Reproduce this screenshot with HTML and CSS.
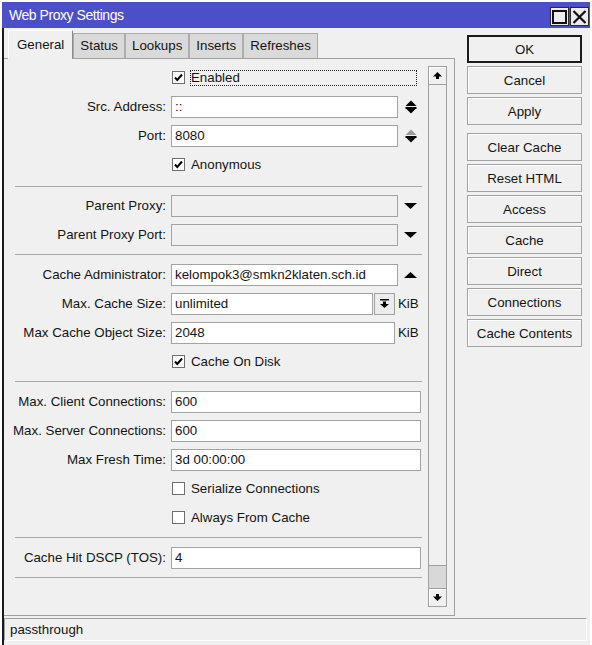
FILE: index.html
```html
<!DOCTYPE html>
<html>
<head>
<meta charset="utf-8">
<title>Web Proxy Settings</title>
<link rel="stylesheet" href="styles.css">
</head>
<body>
<div class="window">
  <div class="titlebar">
    <span class="title">Web Proxy Settings</span>
    <div class="tb-btns">
      <span class="tb-btn"><svg width="15" height="14" viewBox="0 0 15 14"><rect x="1" y="1" width="13" height="12" fill="none" stroke="#111" stroke-width="2"/></svg></span>
      <span class="tb-btn"><svg width="15" height="14" viewBox="0 0 15 14"><path d="M1.5 1L13.5 13M13.5 1L1.5 13" stroke="#111" stroke-width="2.2" fill="none"/></svg></span>
    </div>
  </div>
  <div class="body">
    <div class="top">
      <div class="main">
        <div class="tabs">
          <div class="tab active">General</div>
          <div class="tab">Status</div>
          <div class="tab">Lookups</div>
          <div class="tab">Inserts</div>
          <div class="tab">Refreshes</div>
        </div>
        <div class="panel">
          <div class="form">
            <div class="row">
              <span></span>
              <div class="field"><span class="cb checked"><svg width="11" height="11" viewBox="0 0 11 11"><path d="M2 5.5L4.3 8L9 2.5" stroke="#000" stroke-width="2" fill="none"/></svg></span><span class="focus">Enabled</span></div>
            </div>
            <div class="row">
              <span class="label">Src. Address:</span>
              <div class="field"><div class="input w-mid">::</div>
                <svg class="icon-spin" width="12" height="14" viewBox="0 0 12 14"><path d="M0.5 6L6 0.5L11.5 6Z" fill="#000"/><rect x="0.5" y="7" width="11" height="2" fill="#000"/><path d="M1.5 9H10.5L6 13.5Z" fill="#000"/></svg>
              </div>
            </div>
            <div class="row">
              <span class="label">Port:</span>
              <div class="field"><div class="input w-mid">8080</div>
                <svg class="icon-spin" width="12" height="14" viewBox="0 0 12 14"><path d="M0.5 6L6 0.5L11.5 6Z" fill="#9a9a9a"/><rect x="0.5" y="7" width="11" height="2" fill="#000"/><path d="M1.5 9H10.5L6 13.5Z" fill="#000"/></svg>
              </div>
            </div>
            <div class="row">
              <span></span>
              <div class="field"><span class="cb checked"><svg width="11" height="11" viewBox="0 0 11 11"><path d="M2 5.5L4.3 8L9 2.5" stroke="#000" stroke-width="2" fill="none"/></svg></span><span class="cb-text">Anonymous</span></div>
            </div>

            <div class="sep first"></div>

            <div class="row">
              <span class="label">Parent Proxy:</span>
              <div class="field"><div class="input w-mid disabled"></div>
                <svg class="icon-drop" width="13" height="6" viewBox="0 0 13 6"><path d="M0 0H13L6.5 6Z" fill="#000"/></svg>
              </div>
            </div>
            <div class="row">
              <span class="label">Parent Proxy Port:</span>
              <div class="field"><div class="input w-mid disabled"></div>
                <svg class="icon-drop" width="13" height="6" viewBox="0 0 13 6"><path d="M0 0H13L6.5 6Z" fill="#000"/></svg>
              </div>
            </div>

            <div class="sep"></div>

            <div class="row">
              <span class="label">Cache Administrator:</span>
              <div class="field"><div class="input w-mid">kelompok3@smkn2klaten.sch.id</div>
                <svg class="icon-drop" width="13" height="6" viewBox="0 0 13 6"><path d="M0 6H13L6.5 0Z" fill="#000"/></svg>
              </div>
            </div>
            <div class="row">
              <span class="label">Max. Cache Size:</span>
              <div class="field"><div class="input w-short">unlimited</div>
                <span class="mini-btn"><svg width="9" height="9" viewBox="0 0 9 9"><rect x="0" y="0" width="9" height="1.5" fill="#000"/><rect x="3" y="2.5" width="3" height="3" fill="#000"/><path d="M0 5H9L4.5 9Z" fill="#000"/></svg></span>
                <span class="unit">KiB</span>
              </div>
            </div>
            <div class="row">
              <span class="label">Max Cache Object Size:</span>
              <div class="field"><div class="input w-obj">2048</div><span class="unit">KiB</span></div>
            </div>
            <div class="row">
              <span></span>
              <div class="field"><span class="cb checked"><svg width="11" height="11" viewBox="0 0 11 11"><path d="M2 5.5L4.3 8L9 2.5" stroke="#000" stroke-width="2" fill="none"/></svg></span><span class="cb-text">Cache On Disk</span></div>
            </div>

            <div class="sep"></div>

            <div class="row">
              <span class="label">Max. Client Connections:</span>
              <div class="field"><div class="input w-wide">600</div></div>
            </div>
            <div class="row">
              <span class="label">Max. Server Connections:</span>
              <div class="field"><div class="input w-wide">600</div></div>
            </div>
            <div class="row">
              <span class="label">Max Fresh Time:</span>
              <div class="field"><div class="input w-wide">3d 00:00:00</div></div>
            </div>
            <div class="row">
              <span></span>
              <div class="field"><span class="cb"></span><span class="cb-text">Serialize Connections</span></div>
            </div>
            <div class="row">
              <span></span>
              <div class="field"><span class="cb"></span><span class="cb-text">Always From Cache</span></div>
            </div>

            <div class="sep"></div>

            <div class="row">
              <span class="label">Cache Hit DSCP (TOS):</span>
              <div class="field"><div class="input w-wide">4</div></div>
            </div>

            <div class="sep"></div>
          </div>
          <div class="scrollbar">
            <div class="sb-btn"><svg width="9" height="7" viewBox="0 0 9 7"><path d="M4.5 0L9 4.5H6V7H3V4.5H0Z" fill="#000"/></svg></div>
            <div class="sb-track"><div class="sb-thumb"></div></div>
            <div class="sb-btn"><svg width="9" height="7" viewBox="0 0 9 7"><path d="M3 0H6V2.5H9L4.5 7L0 2.5H3Z" fill="#000"/></svg></div>
          </div>
        </div>
      </div>
      <div class="side">
        <div class="btn default">OK</div>
        <div class="btn">Cancel</div>
        <div class="btn">Apply</div>
        <div class="btn group-start">Clear Cache</div>
        <div class="btn">Reset HTML</div>
        <div class="btn">Access</div>
        <div class="btn">Cache</div>
        <div class="btn">Direct</div>
        <div class="btn">Connections</div>
        <div class="btn">Cache Contents</div>
      </div>
    </div>
    <div class="statusbar">passthrough</div>
  </div>
</div>
</body>
</html>
```

FILE: styles.css
```css
* { box-sizing: border-box; }

body {
  margin: 0;
  background: #ffffff;
  font-family: "Liberation Sans", Arial, sans-serif;
  font-size: 13.3px;
  color: #141414;
}

.window {
  margin: 2px 0 0 2px;
  width: 588px;
  height: 643px;
  display: flex;
  flex-direction: column;
}

.titlebar {
  height: 26px;
  flex: none;
  background: #4b50c8;
  display: flex;
  justify-content: space-between;
  align-items: flex-start;
  padding-left: 7px;
}

.title {
  color: #ffffff;
  font-size: 14px;
  letter-spacing: -0.45px;
  line-height: 26px;
}

.tb-btns {
  display: flex;
  gap: 1px;
  margin-top: 5px;
  margin-right: 1px;
}

.tb-btn {
  width: 19px;
  height: 19px;
  border: 1px solid #2a2a2a;
  background: #ececec;
  display: flex;
  align-items: center;
  justify-content: center;
}

.body {
  flex: 1;
  background: #f0f0f0;
  border-left: 2px solid #1a1a1a;
  display: flex;
  flex-direction: column;
}

.top {
  display: flex;
}

.main {
  width: 451px;
  flex: none;
}

.tabs {
  height: 30px;
  display: flex;
  align-items: flex-end;
  padding-left: 4px;
}

.tab {
  height: 25px;
  line-height: 24px;
  padding: 0 6px;
  background: #dadada;
  border: 1px solid #acacac;
  border-bottom: none;
  white-space: nowrap;
}

.tab.active {
  height: 29px;
  line-height: 27px;
  padding: 0 8px;
  background: #f0f0f0;
  border-top: 1px solid #ffffff;
  border-left: 1px solid #ffffff;
  border-right: 1px solid #8a8a8a;
  margin-bottom: -1px;
  position: relative;
  z-index: 1;
}

.panel {
  height: 558px;
  border: 1px solid #a0a0a0;
  border-left: none;
  display: flex;
}

.form {
  width: 424px;
  flex: none;
  padding-top: 4px;
}

.row {
  display: grid;
  grid-template-columns: 162px 1fr;
  column-gap: 5px;
  height: 29px;
  align-items: center;
}

.label {
  text-align: right;
  white-space: nowrap;
}

.field {
  display: flex;
  align-items: center;
}

.input {
  height: 22px;
  border: 1px solid #a3a3a3;
  background: #ffffff;
  padding-left: 3px;
  line-height: 20px;
  white-space: nowrap;
  overflow: hidden;
}

.input.disabled { background: #f0f0f0; }
.w-mid { width: 227px; }
.w-wide { width: 250px; }
.w-short { width: 202px; }
.w-obj { width: 224px; }

.icon-spin { margin-left: 7px; }
.icon-drop { margin-left: 6px; }

.mini-btn {
  width: 21px;
  height: 22px;
  margin-left: 1px;
  border: 1px solid #a0a0a0;
  background: #ececec;
  display: flex;
  align-items: center;
  justify-content: center;
}

.unit { margin-left: 3px; }

.cb {
  width: 13px;
  height: 13px;
  margin-left: 1px;
  border: 1px solid #6e6e6e;
  background: #ffffff;
  display: flex;
  align-items: center;
  justify-content: center;
}

.cb-text { margin-left: 6px; }

.focus {
  margin-left: 5px;
  width: 227px;
  height: 16px;
  line-height: 14px;
  border: 1px dotted #222222;
}

.sep {
  height: 1px;
  background: #a8a8a8;
  margin: 5px 6px 5px 11px;
}

.sep.first {
  margin-top: 7px;
  margin-bottom: 4px;
}

.scrollbar {
  width: 19px;
  height: 541px;
  margin-top: 7px;
  display: flex;
  flex-direction: column;
}

.sb-btn {
  height: 19px;
  flex: none;
  border: 1px solid #a0a0a0;
  background: #f0f0f0;
  box-shadow: inset 1px 1px #ffffff;
  display: flex;
  align-items: center;
  justify-content: center;
}

.sb-track {
  flex: 1;
  border-left: 1px solid #a0a0a0;
  border-right: 1px solid #a0a0a0;
  background: #f0f0f0;
  display: flex;
  flex-direction: column;
  justify-content: flex-end;
}

.sb-thumb {
  height: 23px;
  background: #d8d8d8;
  border-top: 1px solid #a0a0a0;
}

.side {
  margin-left: 12px;
  width: 115px;
  padding-top: 7px;
  display: flex;
  flex-direction: column;
  gap: 3px;
}

.btn {
  height: 28px;
  border: 1px solid #a3a3a3;
  background: #f0f0f0;
  box-shadow: inset 1px 1px #ffffff;
  display: flex;
  align-items: center;
  justify-content: center;
  white-space: nowrap;
}

.btn.default {
  border: 2px solid #1a1a1a;
  box-shadow: none;
}

.btn.group-start { margin-top: 5px; }

.statusbar {
  margin: 2px 3px 0 0;
  height: 23px;
  border-top: 1px solid #a0a0a0;
  border-left: 1px solid #a0a0a0;
  border-right: 1px solid #ffffff;
  border-bottom: 1px solid #ffffff;
  padding-left: 5px;
  line-height: 21px;
}
```
